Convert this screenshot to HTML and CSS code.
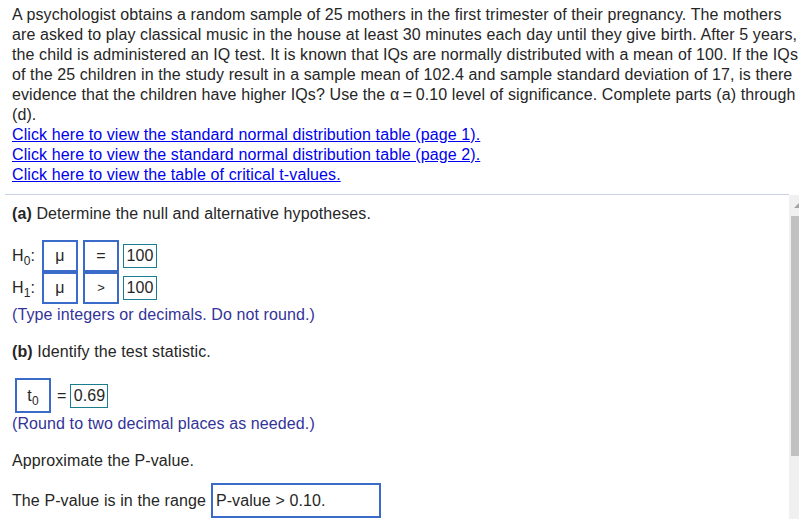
FILE: index.html
```html
<!DOCTYPE html>
<html>
<head>
<meta charset="utf-8">
<link rel="stylesheet" href="styles.css">
</head>
<body>
<div class="page">
  <div class="intro">
    <p class="question">A psychologist obtains a random sample of 25 mothers in the first trimester of their pregnancy. The mothers are asked to play classical music in the house at least 30 minutes each day until they give birth. After 5 years, the child is administered an IQ test. It is known that IQs are normally distributed with a mean of 100. If the IQs of the 25 children in the study result in a sample mean of 102.4 and sample standard deviation of 17, is there evidence that the children have higher IQs? Use the <span class="alpha">α = 0.10</span> level of significance. Complete parts (a) through (d).</p>
    <a class="link" href="#">Click here to view the standard normal distribution table (page 1).</a>
    <a class="link" href="#">Click here to view the standard normal distribution table (page 2).</a>
    <a class="link" href="#">Click here to view the table of critical t-values.</a>
  </div>
  <div class="sep"></div>
  <div class="work">
    <div class="content">
      <p class="step"><b>(a)</b> Determine the null and alternative hypotheses.</p>
      <div class="hyp">
        <div class="hrow">
          <span class="hlabel">H<sub>0</sub>:</span>
          <span class="sel sel-a">μ</span>
          <span class="sel sel-b">=</span>
          <span class="ans ans-100">100</span>
        </div>
        <div class="hrow">
          <span class="hlabel">H<sub>1</sub>:</span>
          <span class="sel sel-a">μ</span>
          <span class="sel sel-b gt">&gt;</span>
          <span class="ans ans-100">100</span>
        </div>
      </div>
      <p class="hint">(Type integers or decimals. Do not round.)</p>
      <p class="step step-b"><b>(b)</b> Identify the test statistic.</p>
      <div class="trow">
        <span class="sel sel-t"><span class="tvar">t<sub>0</sub></span></span>
        <span class="eq">=</span>
        <span class="ans ans-t">0.69</span>
      </div>
      <p class="hint">(Round to two decimal places as needed.)</p>
      <p class="step step-p">Approximate the P-value.</p>
      <div class="prow">
        <span>The P-value is in the range</span>
        <span class="sel sel-p">P-value &gt; 0.10.</span>
      </div>
    </div>
    <div class="scrollbar">
      <div class="arrow"></div>
      <div class="thumb"></div>
    </div>
  </div>
</div>
</body>
</html>
```
FILE: styles.css
```css
* { box-sizing: border-box; }
html, body { margin: 0; padding: 0; background: #fff; }
body {
  font-family: "Liberation Sans", Arial, sans-serif;
  font-size: 16px;
  line-height: 20px;
  letter-spacing: 0.1px;
  color: #262626;
  width: 799px;
  height: 519px;
  overflow: hidden;
}
.page { display: flex; flex-direction: column; height: 519px; }
.intro { padding: 5px 0 0 12px; }
.question { margin: 0; }
.alpha { word-spacing: -1px; }
.link {
  display: block;
  color: #0000ee;
  text-decoration: underline;
  width: max-content;
}
.sep {
  margin: 9px 10px 0 5px;
  height: 1px;
  background: #c8d1e2;
}
.work { display: flex; flex: 1; min-height: 0; }
.content { flex: 1; padding: 9px 0 0 12px; }
.step { margin: 0; }
.step b { font-weight: bold; }
.hyp { margin-top: 16px; display: flex; flex-direction: column; }
.hrow { display: flex; align-items: center; height: 32px; }
.hlabel { width: 30px; font-size: 16px; }
.hlabel sub, .tvar sub { font-size: 12px; vertical-align: -4px; line-height: 0; }
.sel {
  display: inline-flex;
  align-items: center;
  justify-content: center;
  border: 2px solid #3a6bc9;
  color: #262626;
}
.sel-a { width: 36px; height: 32px; }
.sel-b { width: 36px; height: 32px; margin-left: 5px; }
.gt { font-size: 13px; }
.ans {
  display: inline-flex;
  align-items: center;
  justify-content: center;
  border: 1px solid #1a7d8e;
  height: 24px;
  padding: 0 2px;
}
.ans-100 { width: 34px; margin-left: 4px; }
.hint { margin: 1px 0 0; color: #333399; }
.step-b { margin-top: 17px; }
.trow { display: flex; align-items: center; margin: 16px 0 0 3px; height: 35px; }
.sel-t { width: 36px; height: 35px; }
.tvar { display: inline-block; }
.eq { margin: 0 4px 0 6px; }
.ans-t { width: 38px; }
.step-p { margin-top: 17px; }
.prow { display: flex; align-items: center; margin-top: 12px; }
.sel-p {
  width: 170px;
  height: 35px;
  margin-left: 5px;
  justify-content: flex-start;
  padding-left: 3px;
}
.scrollbar {
  width: 10px;
  background: #f0f0f0;
  display: flex;
  flex-direction: column;
  align-items: flex-end;
}
.arrow {
  margin-top: 8px;
  width: 0; height: 0;
  border-left: 5px solid transparent;
  border-bottom: 5px solid #a3a3a3;
}
.thumb {
  margin-top: 8px;
  width: 8px;
  height: 240px;
  background: #c1c1c1;
}
```
